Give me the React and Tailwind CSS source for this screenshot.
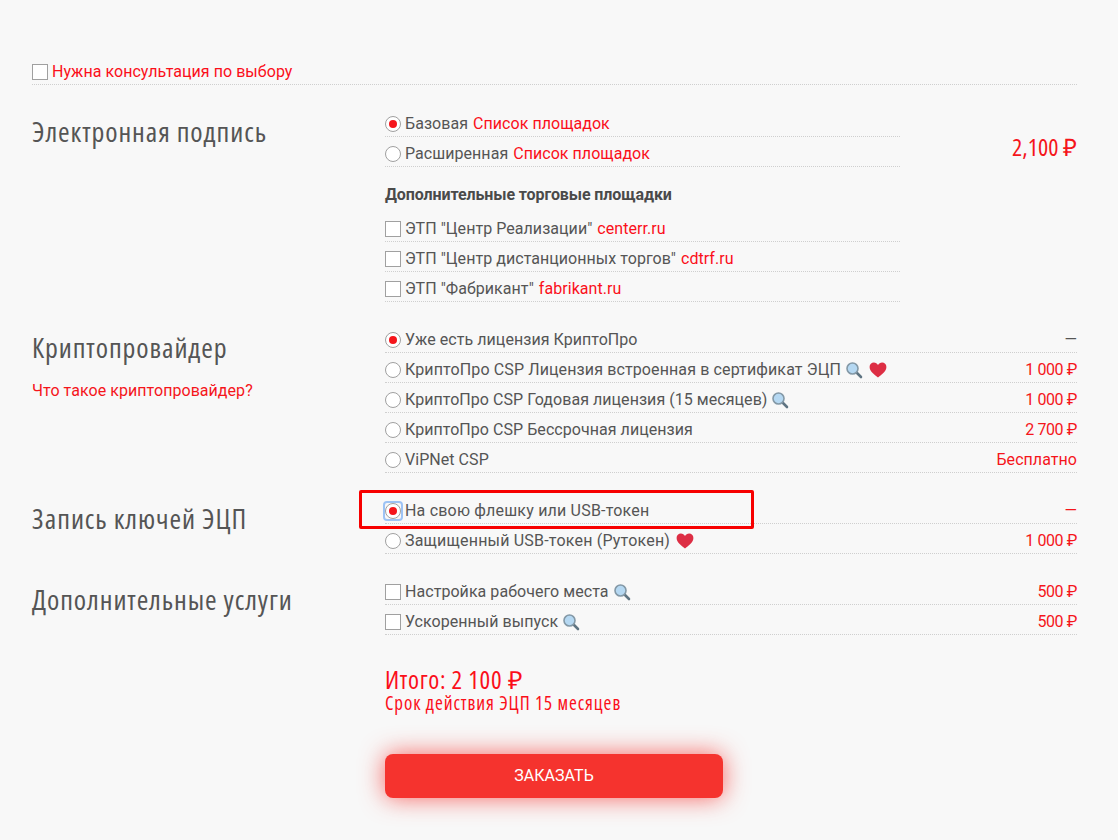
import React from "react";

const Search = () => (
  <svg width="18" height="18" viewBox="0 0 18 18" className="inline-block ml-1 shrink-0">
    <line x1="11.5" y1="11.5" x2="16" y2="16" stroke="#5f7482" strokeWidth="2.6" strokeLinecap="round" />
    <circle cx="7.5" cy="7.5" r="5.5" fill="#b5d8f2" stroke="#8398a6" strokeWidth="1.6" />
  </svg>
);

const Heart = () => (
  <svg width="18" height="16" viewBox="0 0 18 16" className="inline-block ml-[6px] shrink-0">
    <path d="M9 15.500C6 13 .6 9.500.6 5 .6 2.400 2.600.6 4.900.6 6.700.6 8.100 1.500 9 3c.9-1.500 2.300-2.400 4.100-2.400 2.300 0 4.300 1.800 4.300 4.400 0 4.500-5.400 8-8.400 10.500z" fill="#dd2e44" />
  </svg>
);

const Box = () => <span className="w-4 h-4 shrink-0 border border-[#a0a0a0] bg-white mr-1" />;

const Radio = ({ on, focus }) => (
  <span className={`w-4 h-4 shrink-0 mr-1 flex ${focus ? "outline-2 outline-[#9dc3f5] rounded-[2px]" : ""}`}>
    <span className="w-4 h-4 rounded-full border border-[#a0a0a0] bg-white flex items-center justify-center">
      {on && <span className="w-2 h-2 rounded-full bg-[#f5151b]" />}
    </span>
  </span>
);

const Row = ({ control, price, muted, wide, children }) => (
  <div className="h-[30px] flex items-center pt-[5px] border-b border-dotted border-[#cfcfcf]">
    {control}
    <span className={`flex items-center ${wide ? "tracking-[0.2px]" : ""}`}>{children}</span>
    {price && (
      <span className={`ml-auto ${muted ? "text-[#555555]" : "text-[#f5151b]"} ${price.includes("₽") ? "tracking-[-0.4px]" : ""}`}>{price}</span>
    )}
  </div>
);

const Red = ({ children }) => <span className="text-[#fb0f1a] ml-[5px]">{children}</span>;

const Heading = ({ children }) => (
  <h2 className="font-['Open_Sans',sans-serif] [font-stretch:75%] text-[28px] tracking-[0.9px] leading-[30px] text-[#555555]">{children}</h2>
);

const Section = ({ title, note, children }) => (
  <div className="flex mt-[21px]">
    <div className="w-[353px] shrink-0 pt-[9px]">
      <Heading>{title}</Heading>
      {note && <div className="text-[#f5151b] mt-[17px]">{note}</div>}
    </div>
    <div className="flex-1">{children}</div>
  </div>
);

export default function App() {
  return (
    <div className="relative min-h-[840px] bg-[#f8f8f8] pl-8 pr-[41px] pt-[55px] font-['Roboto',sans-serif] text-[16px] tracking-[0.05px] text-[#555555] w-[1118px]">
      <Row control={<Box />}>
        <span className="text-[#fb0f1a]">Нужна консультация по выбору</span>
      </Row>

      <div className="flex mt-[22px]">
        <div className="w-[353px] shrink-0 pt-[9px]">
          <Heading>Электронная подпись</Heading>
        </div>
        <div className="w-[515px] shrink-0">
          <Row control={<Radio on />}>Базовая <Red>Список площадок</Red></Row>
          <Row control={<Radio />}>Расширенная <Red>Список площадок</Red></Row>
          <div className="font-bold tracking-[-0.1px] text-[#4a4a4a] mt-[18px] mb-[8px] h-[19px] leading-[19px]">Дополнительные торговые площадки</div>
          <Row control={<Box />}>ЭТП "Центр Реализации" <Red>centerr.ru</Red></Row>
          <Row control={<Box />}>ЭТП "Центр дистанционных торгов" <Red>cdtrf.ru</Red></Row>
          <Row control={<Box />}>ЭТП "Фабрикант" <Red>fabrikant.ru</Red></Row>
        </div>
        <div className="flex-1 text-right pt-[24px] font-['Open_Sans',sans-serif] [font-stretch:75%] text-[24px] leading-[32px] text-[#f5151b]">2,100 ₽</div>
      </div>

      <Section title="Криптопровайдер" note="Что такое криптопровайдер?">
        <Row control={<Radio on />} price="—" muted>Уже есть лицензия КриптоПро</Row>
        <Row control={<Radio />} price="1 000 ₽"><span className="tracking-[0.12px]">КриптоПро CSP Лицензия встроенная в сертификат ЭЦП</span> <Search /><Heart /></Row>
        <Row control={<Radio />} price="1 000 ₽">КриптоПро CSP Годовая лицензия (15 месяцев) <Search /></Row>
        <Row control={<Radio />} price="2 700 ₽">КриптоПро CSP Бессрочная лицензия</Row>
        <Row control={<Radio />} price="Бесплатно">ViPNet CSP</Row>
      </Section>

      <Section title="Запись ключей ЭЦП">
        <Row control={<Radio on focus />} price="—" wide>На свою флешку или USB-токен</Row>
        <Row control={<Radio />} price="1 000 ₽" wide>Защищенный USB-токен (Рутокен) <Heart /></Row>
      </Section>

      <Section title="Дополнительные услуги">
        <Row control={<Box />} price="500 ₽">Настройка рабочего места <Search /></Row>
        <Row control={<Box />} price="500 ₽">Ускоренный выпуск <Search /></Row>
      </Section>

      <div className="ml-[353px] mt-[31px] font-['Open_Sans',sans-serif] [font-stretch:75%] text-[#fb0f1a]">
        <div className="text-[25px] tracking-[0.7px] leading-[26px]">Итого: 2 100 ₽</div>
        <div className="text-[19px] tracking-[0.9px] leading-[22px]">Срок действия ЭЦП 15 месяцев</div>
      </div>

      <button className="block ml-[353px] mt-[40px] w-[338px] h-[44px] rounded-lg bg-[#f5332e] text-white shadow-[0_0_24px_rgba(245,51,46,0.75)]">ЗАКАЗАТЬ</button>

      {/* выделение на скриншоте */}
      <div className="absolute left-[359px] top-[490px] w-[395px] h-[39px] border-[3px] border-[#f70000] rounded-[2px]" />
    </div>
  );
}
